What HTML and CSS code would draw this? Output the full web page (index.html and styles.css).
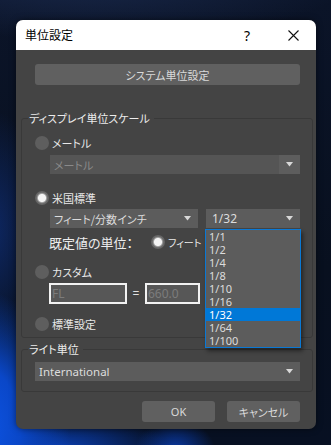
FILE: index.html
```html
<!DOCTYPE html>
<html lang="ja">
<head>
    <meta charset="UTF-8">
    <meta name="viewport" content="width=device-width, initial-scale=1.0">
    <title>単位設定</title>
    <link rel="stylesheet" href="styles.css">
</head>
<body>
    <div class="dialog">
        <div class="titlebar">
            <span class="title">単位設定</span>
            <span class="help">?</span>
            <span class="close">
                <svg width="11" height="11" viewBox="0 0 11 11"><path d="M0.5 0.5 L10.5 10.5 M10.5 0.5 L0.5 10.5" stroke="#111" stroke-width="1.1" fill="none"/></svg>
            </span>
        </div>

        <div class="content">
            <div class="btn system">システム単位設定</div>

            <div class="group display-group">
                <div class="legend">ディスプレイ単位スケール</div>

                <div class="radio-row metric-row"><span class="radio"></span>メートル</div>
                <div class="combo disabled metric-combo">
                    <span class="combo-text">メートル</span>
                    <span class="arrow-box"><svg width="7" height="5" viewBox="0 0 7 5"><polygon points="0,0 7,0 3.5,4.5" fill="#d8d8d8"/></svg></span>
                </div>

                <div class="radio-row us-row"><span class="radio checked"></span>米国標準</div>
                <div class="combo-row">
                    <div class="combo feet-combo">
                        <span class="combo-text">フィート/分数インチ</span>
                        <span class="arrow-box"><svg width="7" height="5" viewBox="0 0 7 5"><polygon points="0,0 7,0 3.5,4.5" fill="#d8d8d8"/></svg></span>
                    </div>
                    <div class="combo frac-combo">
                        <span class="combo-text latin">1/32</span>
                        <span class="arrow-box"><svg width="7" height="5" viewBox="0 0 7 5"><polygon points="0,0 7,0 3.5,4.5" fill="#d8d8d8"/></svg></span>
                    </div>
                </div>

                <div class="default-row">
                    <span class="default-label">既定値の単位：</span>
                    <span class="radio checked"></span>
                    <span class="default-value">フィート</span>
                </div>

                <div class="radio-row custom-row"><span class="radio"></span>カスタム</div>
                <div class="input-row">
                    <div class="field name-field">FL</div>
                    <span class="equals">=</span>
                    <div class="field value-field">660.0</div>
                </div>

                <div class="radio-row generic-row"><span class="radio"></span>標準設定</div>
            </div>

            <div class="group light-group">
                <div class="legend">ライト単位</div>
                <div class="combo light-combo">
                    <span class="combo-text latin">International</span>
                    <span class="arrow-box"><svg width="7" height="5" viewBox="0 0 7 5"><polygon points="0,0 7,0 3.5,4.5" fill="#d8d8d8"/></svg></span>
                </div>
            </div>

            <div class="actions">
                <div class="btn latin">OK</div>
                <div class="btn">キャンセル</div>
            </div>
        </div>

        <ul class="dropdown-list">
            <li>1/1</li>
            <li>1/2</li>
            <li>1/4</li>
            <li>1/8</li>
            <li>1/10</li>
            <li>1/16</li>
            <li class="selected">1/32</li>
            <li>1/64</li>
            <li>1/100</li>
        </ul>
    </div>
</body>
</html>
```

FILE: styles.css
```css
* {
    box-sizing: border-box;
}

html, body {
    margin: 0;
    height: 100%;
}

body {
    width: 331px;
    height: 445px;
    overflow: hidden;
    font-family: "Noto Sans CJK JP", sans-serif;
    font-feature-settings: "palt";
    background-color: #09111f;
    background-image:
        radial-gradient(ellipse 90px 140px at -20px 430px, #0d55e6 0%, #0a47c8 45%, rgba(10, 60, 170, 0) 100%),
        radial-gradient(ellipse 110px 40px at 60px 450px, #0a3fb4 0%, rgba(10, 63, 180, 0) 100%),
        radial-gradient(ellipse 40px 30px at 175px 450px, #0a3aa6 0%, rgba(10, 58, 166, 0) 100%),
        radial-gradient(ellipse 60px 120px at -10px 230px, rgba(16, 50, 130, 0.7) 0%, rgba(16, 50, 130, 0) 100%),
        radial-gradient(ellipse 260px 60px at 90px -20px, rgba(35, 55, 100, 0.55) 0%, rgba(35, 55, 100, 0) 100%),
        linear-gradient(180deg, #0b1428 0%, #08101f 60%, #071022 100%);
}

.dialog {
    position: relative;
    width: 300px;
    height: 409px;
    margin: 20px 0 0 16px;
    background-color: #444;
    border-radius: 7px;
    overflow: hidden;
    box-shadow: 0 0 6px rgba(0, 0, 0, 0.5);
}

.titlebar {
    height: 30px;
    background-color: #fff;
    display: flex;
    align-items: center;
    padding-left: 9px;
    color: #000;
}

.title {
    font-size: 12px;
    flex: 1;
    margin-top: -1px;
}

.help {
    font-family: "Noto Sans", sans-serif;
    font-size: 14px;
    width: 16px;
    text-align: center;
    margin-right: 33px;
}

.close {
    display: flex;
    margin-right: 17px;
}

.content {
    padding: 0 3px 0 5px;
}

.btn {
    background-color: #606060;
    color: #d9d9d9;
    border-radius: 3px;
    height: 21px;
    display: flex;
    align-items: center;
    justify-content: center;
    font-size: 11px;
}

.latin {
    font-family: "Noto Sans", sans-serif;
}

.system {
    margin: 14px 13px 0 14px;
}

.group {
    border: 1px solid #393939;
    border-radius: 3px;
    padding: 0 12px 0 13px;
}

.legend {
    display: block;
    width: fit-content;
    margin: -8px 0 0 -7px;
    padding: 0 4px 0 1px;
    background-color: #444;
    color: #ececec;
    font-size: 11px;
    line-height: 15px;
    height: 15px;
}

.display-group {
    margin-top: 33px;
    height: 220px;
}

.radio-row {
    display: flex;
    align-items: center;
    height: 14px;
    color: #e8e8e8;
    font-size: 11px;
}

.radio {
    width: 14px;
    height: 14px;
    border-radius: 50%;
    background-color: #5e5e5e;
    margin-right: 3px;
    flex: none;
}

.radio.checked {
    background: radial-gradient(circle, #f4f4f4 0, #f4f4f4 3.6px, #9a9a9a 4.6px, #6a6a6a 5.6px, #626262 7px);
}

.metric-row {
    margin-top: 10px;
}

.combo {
    height: 19px;
    background-color: #5c5c5c;
    color: #dcdcdc;
    display: flex;
    align-items: center;
    font-size: 11px;
}

.combo-text {
    flex: 1;
    padding-left: 4px;
    white-space: nowrap;
}

.arrow-box {
    width: 21px;
    height: 100%;
    display: flex;
    align-items: center;
    justify-content: center;
}

.combo.disabled {
    background-color: #555;
    color: #8a8a8a;
}

.combo.disabled .arrow-box {
    background-color: #5d5d5d;
}

.metric-combo {
    margin: 5px 0 0 15px;
}

.us-row {
    margin-top: 17px;
}

.combo-row {
    display: flex;
    gap: 8px;
    margin: 4px 0 0 15px;
}

.feet-combo {
    width: 148px;
}

.frac-combo {
    flex: 1;
}

.frac-combo .combo-text {
    padding-left: 6px;
    font-size: 12px;
}

.default-row {
    display: flex;
    align-items: center;
    height: 16px;
    margin: 6px 0 0 14px;
    color: #ececec;
}

.default-label {
    font-size: 13px;
    width: 102px;
}

.default-value {
    font-size: 10px;
    white-space: nowrap;
}

.custom-row {
    margin-top: 15px;
}

.input-row {
    display: flex;
    align-items: center;
    margin: 4px 0 0 14px;
    height: 21px;
}

.field {
    height: 21px;
    border: 2px solid #f2f2f2;
    background-color: #575757;
    color: #7c7c7c;
    font-family: "Noto Sans", sans-serif;
    font-size: 12px;
    line-height: 17px;
    padding-left: 1px;
    overflow: hidden;
    white-space: nowrap;
}

.name-field {
    width: 78px;
}

.equals {
    width: 18px;
    text-align: center;
    color: #e0e0e0;
    font-family: "Noto Sans", sans-serif;
    font-size: 12px;
}

.value-field {
    width: 55px;
}

.generic-row {
    margin-top: 13px;
}

.light-group {
    margin-top: 11px;
    height: 43px;
}

.light-combo {
    margin-top: 5px;
}

.light-combo .combo-text {
    font-size: 11.5px;
}

.actions {
    display: flex;
    justify-content: flex-end;
    gap: 12px;
    margin: 9px 13px 0 0;
}

.actions .btn {
    width: 73px;
}

.dropdown-list {
    position: absolute;
    left: 189px;
    top: 209px;
    width: 96px;
    margin: 0;
    padding: 0;
    list-style: none;
    background-color: #5c5c5c;
    border: 1px solid #0a78d4;
    box-shadow: 2px 3px 4px rgba(0, 0, 0, 0.45);
    font-family: "Noto Sans", sans-serif;
    font-size: 11px;
    color: #dcdcdc;
}

.dropdown-list li {
    height: 13px;
    line-height: 13px;
    padding-left: 3px;
    overflow: hidden;
}

.dropdown-list li.selected {
    background-color: #0078d7;
    color: #fff;
}
```
